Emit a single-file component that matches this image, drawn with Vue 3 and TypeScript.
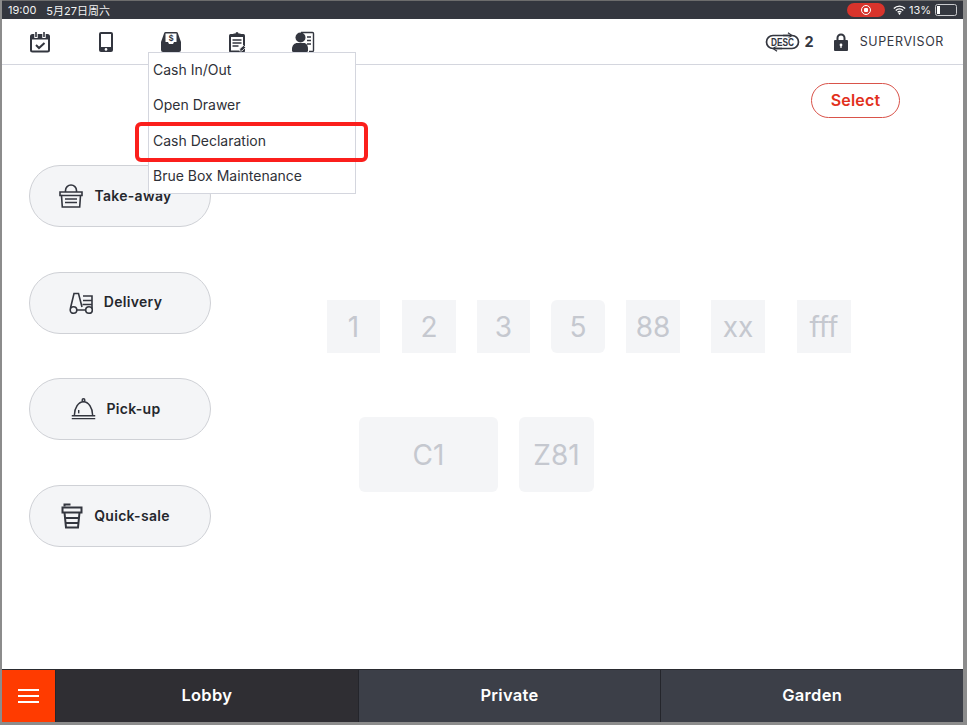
<script setup lang="ts">
/**
 * Lobby floor view: top toolbar with the cash menu open, order-type pills,
 * table canvas and area tabs.
 */
interface FloorTable {
  id: string
  x: number
  y: number
  w: number
  h: number
  round?: boolean
}

const menuItems = ['Cash In/Out', 'Open Drawer', 'Cash Declaration', 'Brue Box Maintenance']

const orderTypes = ['take', 'delivery', 'pickup', 'quick'] as const

const orderLabels: Record<(typeof orderTypes)[number], string> = {
  take: 'Take-away',
  delivery: 'Delivery',
  pickup: 'Pick-up',
  quick: 'Quick-sale'
}

// Positions relative to the floor canvas, the canvas is the content here
const tables: FloorTable[] = [
  { id: '1', x: 325, y: 235, w: 53, h: 53 },
  { id: '2', x: 400, y: 235, w: 54, h: 53 },
  { id: '3', x: 475, y: 235, w: 53, h: 53 },
  { id: '5', x: 549, y: 235, w: 54, h: 53, round: true },
  { id: '88', x: 624, y: 235, w: 54, h: 53 },
  { id: 'xx', x: 709, y: 235, w: 54, h: 53 },
  { id: 'fff', x: 795, y: 235, w: 54, h: 53 },
  { id: 'C1', x: 357, y: 352, w: 139, h: 75, round: true },
  { id: 'Z81', x: 517, y: 352, w: 75, h: 75, round: true }
]

const areas = ['Lobby', 'Private', 'Garden']

function tableStyle(t: FloorTable) {
  return {
    left: `${t.x}px`,
    top: `${t.y}px`,
    width: `${t.w}px`,
    height: `${t.h}px`
  }
}
</script>

<template>
  <div class="frame">
    <div class="screen">
      <header class="status">
        <span class="clock">19:00</span>
        <span class="date">5月27日周六</span>
        <span class="spacer"></span>
        <span class="rec"><i></i></span>
        <svg class="wifi" viewBox="0 0 16 12" width="13" height="10">
          <path d="M1 4.200a10 10 0 0 1 14 0M3.400 6.600a6.600 6.600 0 0 1 9.200 0M5.700 8.800a3.200 3.200 0 0 1 4.600 0" fill="none" stroke="#fff" stroke-width="1.600" />
          <path d="M8 12l-1.500-1.800a2 2 0 0 1 3 0z" fill="#fff" />
        </svg>
        <span class="pct">13%</span>
        <span class="battery"><i></i></span>
      </header>

      <nav class="toolbar">
        <div class="tools">
          <!-- schedule -->
          <svg class="tool" viewBox="0 0 22 22" width="22" height="22">
            <rect x="2" y="4" width="18" height="16.500" rx="1.500" fill="none" stroke="#33363f" stroke-width="2" />
            <path d="M2 4h18v4.500H2z" fill="#33363f" />
            <path d="M7 1v6M15 1v6" stroke="#fff" stroke-width="3.400" />
            <path d="M7 1v5M15 1v5" stroke="#33363f" stroke-width="1.600" />
            <path d="M7 14l3 3 5.500-5" fill="none" stroke="#33363f" stroke-width="2" />
          </svg>
          <!-- tablet -->
          <svg class="tool" viewBox="0 0 22 22" width="22" height="22">
            <rect x="4" y="1" width="14" height="20" rx="2" fill="#33363f" />
            <rect x="6" y="3" width="10" height="13" fill="#fff" />
            <circle cx="11" cy="18.400" r="1.300" fill="#fff" />
          </svg>
          <!-- cash drawer -->
          <svg class="tool" viewBox="0 0 22 22" width="22" height="22">
            <path d="M4 2.500a1.500 1.500 0 0 1 1.500-1.500h11A1.500 1.500 0 0 1 18 2.500L21 11v8a2 2 0 0 1-2 2H3a2 2 0 0 1-2-2v-8z" fill="#33363f" />
            <path d="M5.500 2.500h11v8.500h-2.500l-1 2h-4l-1-2H5.500z" fill="#fff" />
            <text x="11" y="9.500" text-anchor="middle" class="dollar">$</text>
          </svg>
          <!-- report clipboard -->
          <svg class="tool" viewBox="0 0 22 22" width="22" height="22">
            <rect x="3" y="3" width="16" height="18.500" rx="1.500" fill="#33363f" />
            <rect x="5" y="6" width="12" height="13.500" fill="#fff" />
            <path d="M7.500 4V2.500h2a1.500 1.500 0 0 1 3 0h2V6h-7z" fill="#33363f" />
            <path d="M6.500 9h9M6.500 12h9M6.500 15h6" stroke="#33363f" stroke-width="1.300" />
            <path d="M13.500 20l.5-2.500 3.500-3 2 2-3.500 3.500z" fill="#33363f" stroke="#fff" stroke-width=".7" />
          </svg>
          <!-- staff -->
          <svg class="tool" viewBox="0 0 24 22" width="24" height="22">
            <path d="M10 1.500h11.500a1 1 0 0 1 1 1v17a1 1 0 0 1-1 1H18" fill="none" stroke="#33363f" stroke-width="1.400" />
            <path d="M16 6h4M16 9.500h4M16 13h4" stroke="#33363f" stroke-width="1.400" />
            <circle cx="9.500" cy="6.500" r="5" fill="#33363f" />
            <path d="M1 18c0-4 3-6 5-6h7c2 0 4 2 4 6v1.500a1.500 1.500 0 0 1-1.500 1.500h-13A1.500 1.500 0 0 1 1 19.500z" fill="#33363f" />
          </svg>
        </div>
        <span class="spacer"></span>
        <svg class="desc" viewBox="0 0 37 20" width="37" height="20">
          <path d="M9 3.500h19a6.500 6.500 0 0 1 0 13H9a6.500 6.500 0 0 1 0-13z" fill="none" stroke="#33363f" stroke-width="1.700" />
          <path d="M19 3.500h6M24 .8l3.800 2.700L24 6.200M18 16.500h-6M13 13.800l-3.800 2.700 3.800 2.700" fill="none" stroke="#33363f" stroke-width="1.300" />
          <rect x="6" y="5.500" width="25" height="9" fill="#fff" />
          <text x="18.500" y="14" text-anchor="middle" textLength="23" lengthAdjust="spacingAndGlyphs" class="desc-text">DESC</text>
        </svg>
        <span class="desc-count">2</span>
        <svg class="lock" viewBox="0 0 14 18" width="14" height="18">
          <path d="M3.500 8V5a3.500 3.500 0 0 1 7 0v3" fill="none" stroke="#33363f" stroke-width="2" />
          <rect x="0" y="7" width="14" height="11" rx="1" fill="#33363f" />
          <circle cx="7" cy="12" r="1.400" fill="#fff" />
          <path d="M6.400 12h1.200v3H6.400z" fill="#fff" />
        </svg>
        <span class="role">SUPERVISOR</span>
      </nav>

      <main class="floor">
        <ul class="menu">
          <li v-for="item in menuItems" :key="item">{{ item }}</li>
        </ul>
        <div class="annotation"></div>

        <button class="select">Select</button>

        <div class="orders">
          <button v-for="o in orderTypes" :key="o" class="pill" :class="`pill-${o}`">
            <svg v-if="o === 'take'" viewBox="0 0 24 24" width="24" height="24" fill="none" stroke="#33363f" stroke-width="1.600">
              <path d="M6.500 8V6.500a5.500 5.500 0 0 1 11 0V8" />
              <path d="M1 8h22v3.500h-1.500l-.8 11.500H3.300L2.500 11.500H1z" />
              <path d="M2.500 11.500h19M6 15h12M6 18.500h12" />
            </svg>
            <svg v-else-if="o === 'delivery'" viewBox="0 0 24 24" width="24" height="24" fill="none" stroke="#33363f" stroke-width="1.600">
              <circle cx="4.500" cy="19" r="3.300" />
              <circle cx="20" cy="19" r="3.300" />
              <path d="M1.500 17L5 2.500h4.500L13 16M8 19h8.500" />
              <path d="M14 5h9v8.500h-9.500M14 9.500h9M23 13.500v4" />
            </svg>
            <svg v-else-if="o === 'pickup'" viewBox="0 0 26 24" width="25" height="24" fill="none" stroke="#33363f" stroke-width="1.500">
              <circle cx="13" cy="2.800" r="1.400" />
              <path d="M3.500 18.500a9.500 14 0 0 1 19 0" />
              <path d="M.8 19h24.400M.8 22h24.400" />
              <path d="M8 16.500v-3.500" />
            </svg>
            <svg v-else viewBox="0 0 22 26" width="22" height="26" fill="none" stroke="#33363f" stroke-width="2">
              <path d="M3.500 3.500V1.500h6" />
              <path d="M1.500 9.500V4.500h19v5z" />
              <path d="M3.500 9.500L5 24.500h12l1.500-15M4 15h14M4.500 20h13" />
            </svg>
            <span class="pill-label">{{ orderLabels[o] }}</span>
          </button>
        </div>

        <div
          v-for="t in tables"
          :key="t.id"
          class="table"
          :class="{ round: t.round }"
          :style="tableStyle(t)"
        >
          {{ t.id }}
        </div>
      </main>

      <footer class="tabs">
        <button class="burger"><i></i><i></i><i></i></button>
        <button
          v-for="(a, i) in areas"
          :key="a"
          class="tab"
          :class="{ active: i === 0 }"
        >
          {{ a }}
        </button>
      </footer>
    </div>
  </div>
</template>

<style scoped>
.frame {
  width: 967px;
  height: 725px;
  box-sizing: border-box;
  padding: 0 4px 3px 2px;
  background: #8c8c8c;
  font-family: Inter, "Liberation Sans", "Noto Sans CJK SC", sans-serif;
  overflow: hidden;
}

.screen {
  height: 100%;
  display: flex;
  flex-direction: column;
  background: #fff;
}

.spacer {
  flex: 1;
}

.status {
  height: 19px;
  flex: none;
  display: flex;
  align-items: center;
  padding: 0 5px 0 6px;
  background: #34373f;
  border-top: 1px solid #6d6d6d;
  box-sizing: border-box;
  color: #f2f2f2;
  font-size: 11px;
}

.date {
  margin-left: 10px;
  font-size: 11px;
}

.rec {
  width: 38px;
  height: 14px;
  border-radius: 7px;
  background: #d8342c;
  display: flex;
  align-items: center;
  justify-content: center;
  margin-right: 8px;
}

.rec i {
  width: 10px;
  height: 10px;
  box-sizing: border-box;
  border: 1.500px solid #fff;
  border-radius: 50%;
  background: radial-gradient(circle, #fff 2px, transparent 2.500px);
}

.wifi {
  margin-right: 3px;
}

.pct {
  font-size: 11px;
}

.battery {
  width: 18px;
  height: 8px;
  margin-left: 4px;
  margin-right: 1px;
  border: 1px solid #c9cacd;
  border-radius: 2.500px;
  padding: 1px;
}

.battery i {
  display: block;
  width: 2.500px;
  height: 100%;
  background: #fff;
}

.toolbar {
  height: 46px;
  flex: none;
  display: flex;
  align-items: center;
  box-sizing: border-box;
  border-bottom: 1px solid #d4d6de;
  padding: 0 19px 0 27px;
}

.tools {
  display: flex;
  align-items: center;
  gap: 43.500px;
}

.tool {
  display: block;
}

.dollar {
  font: 700 8.500px "Liberation Sans", sans-serif;
  fill: #33363f;
}

.desc {
  margin-right: 4px;
}

.desc-text {
  font: 700 10px "Liberation Sans", sans-serif;
  fill: #33363f;
}

.desc-count {
  font-size: 14.500px;
  font-weight: 700;
  color: #33363f;
  margin-right: 20px;
}

.lock {
  margin-right: 12px;
}

.role {
  font-size: 12.500px;
  letter-spacing: 0.600px;
  color: #33363f;
}

.floor {
  flex: 1;
  position: relative;
  min-height: 0;
  padding: 100px 0 0 27px;
  box-sizing: border-box;
}

.menu {
  position: absolute;
  left: 146px;
  top: -13px;
  width: 208px;
  height: 142px;
  box-sizing: border-box;
  margin: 0;
  padding: 0;
  list-style: none;
  background: #fff;
  border: 1px solid #d4d6de;
  z-index: 2;
}

.menu li {
  height: 35.300px;
  line-height: 34px;
  padding-left: 4px;
  font-size: 14px;
  color: #2f3138;
}

.annotation {
  position: absolute;
  left: 133px;
  top: 57px;
  width: 233px;
  height: 40px;
  box-sizing: border-box;
  border: 4px solid #fb1f1c;
  border-radius: 6px;
  z-index: 3;
}

.select {
  position: absolute;
  left: 809px;
  top: 18px;
  width: 89px;
  height: 35px;
  border: 1px solid #d9534a;
  border-radius: 18px;
  background: #fff;
  color: #e2311d;
  font: 600 16px Inter, sans-serif;
  letter-spacing: 0.200px;
  padding: 0 0 2px;
}

.orders {
  display: flex;
  flex-direction: column;
  gap: 44.700px;
  width: 182px;
}

.pill {
  width: 182px;
  height: 62px;
  flex: none;
  box-sizing: border-box;
  display: flex;
  align-items: center;
  justify-content: center;
  gap: 11px;
  padding: 0 9px 0 0;
  border: 1px solid #cfd1d6;
  border-radius: 31px;
  background: #f4f5f7;
  color: #25272d;
  font: 600 14px Inter, sans-serif;
  letter-spacing: 0.300px;
}

.pill svg {
  flex: none;
}

.pill-label {
  margin-bottom: 2px;
}

.table {
  position: absolute;
  display: flex;
  align-items: center;
  justify-content: center;
  background: #f4f5f7;
  color: #c5c8cf;
  font-size: 28px;
}

.table.round {
  border-radius: 6px;
}

.tabs {
  height: 53px;
  flex: none;
  display: flex;
  border-top: 1px solid #2a2b30;
  box-sizing: border-box;
}

.tabs button {
  border: 0;
  margin: 0;
}

.burger {
  width: 54px;
  flex: none;
  display: flex;
  flex-direction: column;
  align-items: center;
  justify-content: center;
  gap: 4px;
  padding: 0;
  background: #ff3b00;
  border-right: 1px solid #24252b !important;
}

.burger i {
  display: block;
  width: 21px;
  height: 2px;
  background: #fff;
}

.tab {
  flex: 1;
  padding: 0 0 2px;
  background: #3c3f48;
  color: #fff;
  font: 600 16.500px Inter, sans-serif;
  letter-spacing: 0.300px;
  border-right: 1px solid #24252b !important;
}

.tab:last-child {
  border-right: 0 !important;
}

.tab.active {
  background: #2f2e33;
}
</style>
